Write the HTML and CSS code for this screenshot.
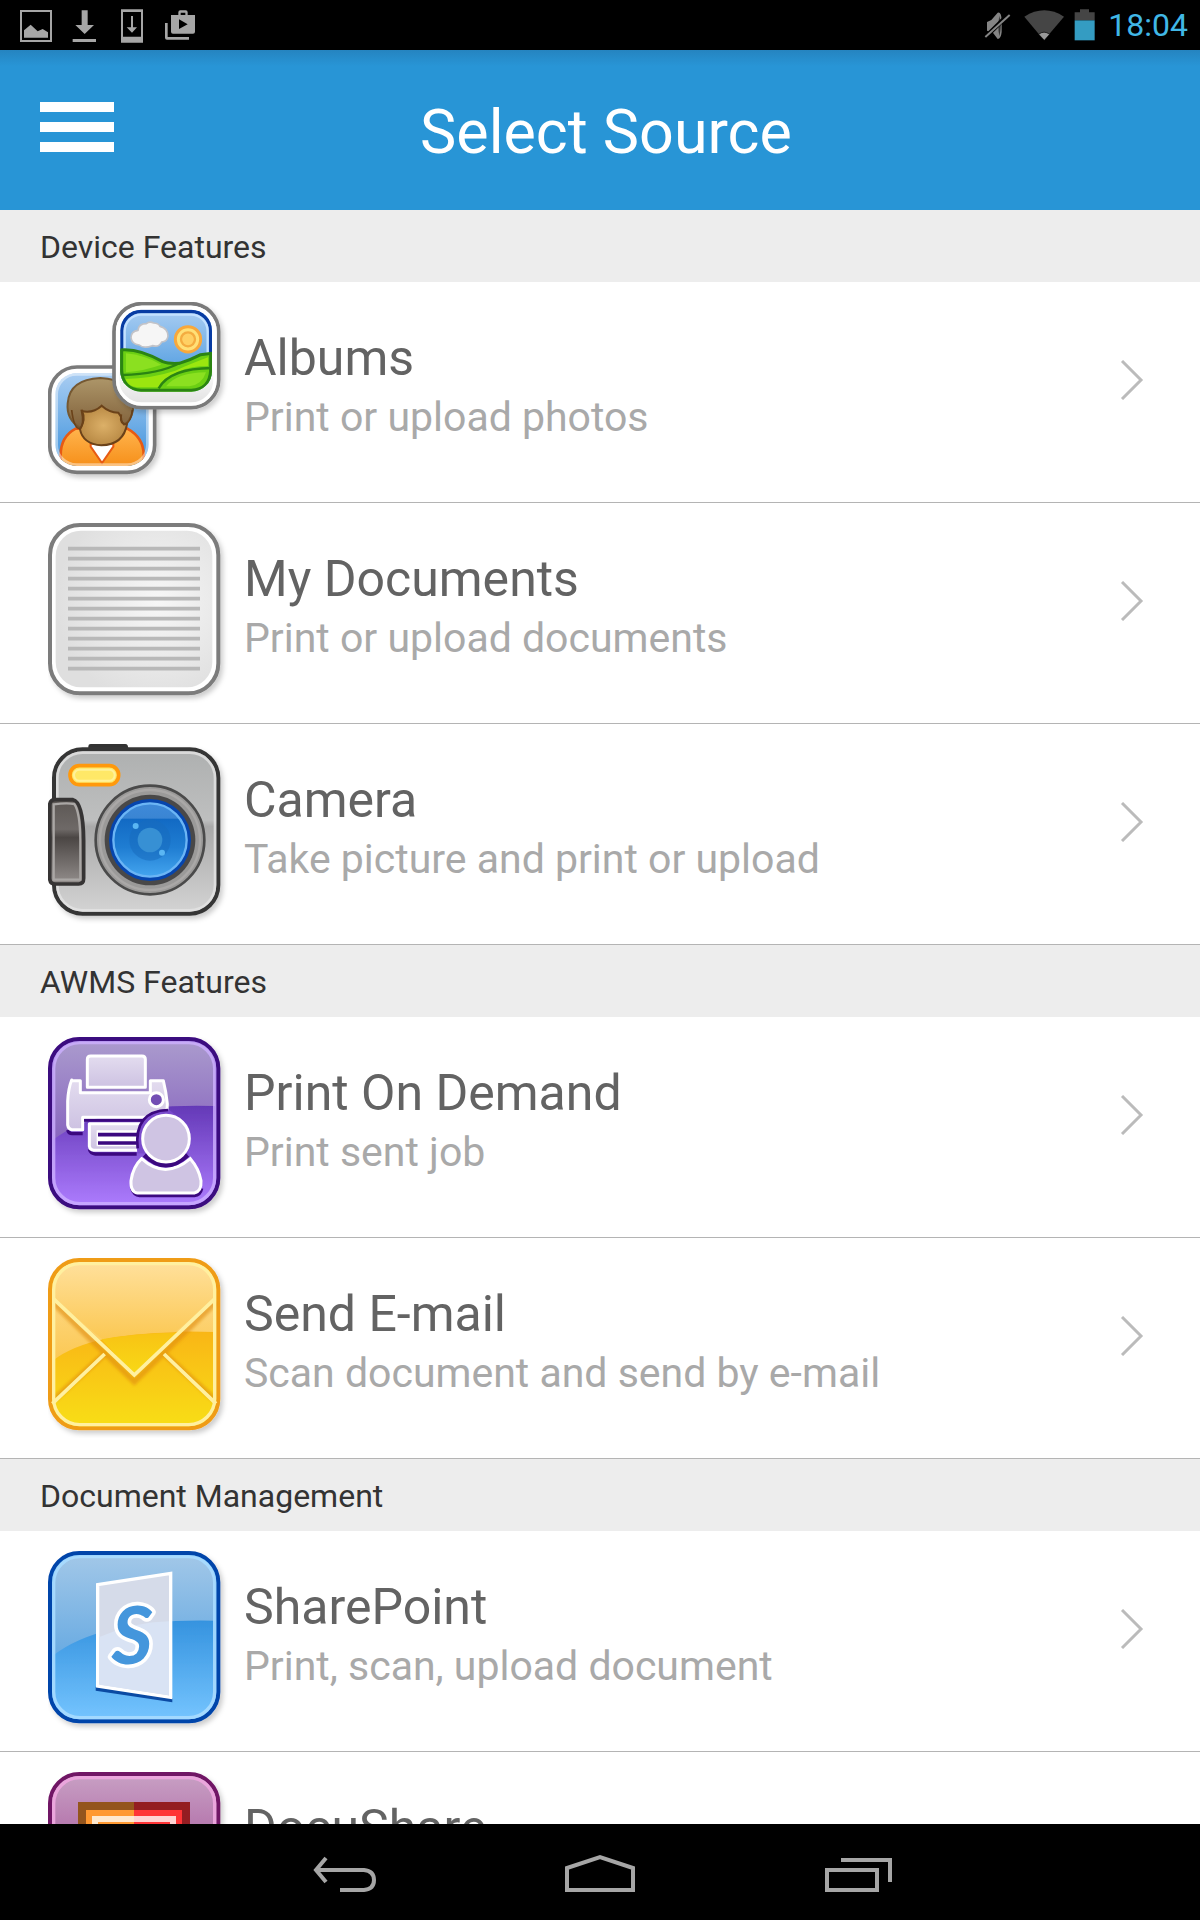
FILE: index.html
```html
<!DOCTYPE html>
<html lang="en">
<head>
<meta charset="utf-8">
<meta name="viewport" content="width=device-width, initial-scale=1">
<title>Select Source</title>
<link rel="stylesheet" href="styles.css">
</head>
<body>
<div class="status">
  <div class="status-left">
    <svg width="180" height="36" viewBox="54 18 540 108" fill="#a6a6a6" aria-hidden="true">
      <path d="M60 27h96v96H60zM66 33v84h84V33z" fill-rule="evenodd"/>
      <path d="M72 110V88l20-17 21 20 15-7 16 10v16z"/>
      <path d="M245 28h18v44h19l-28 27-28-27h19zM218 114h70v9h-70z"/>
      <path d="M363 25h66v100h-66zM369 33v74h54V33z" fill-rule="evenodd"/>
      <path d="M393 45h6v34h12l-15 16-16-16h13z"/>
      <path d="M495 66h8v42h64v8h-66q-6 0-6-6z"/>
      <path d="M513 42h22v-8q0-6 6-6h16q6 0 6 6v8h22v50q0 6-6 6h-60q-6 0-6-6zM542 42h14v-7h-14zM537 55v29l26-14z" fill-rule="evenodd"/>
    </svg>
  </div>
  <div class="status-right">
    <svg width="112" height="36" viewBox="250 20 336 108" aria-hidden="true">
      <path d="M259 65l13-6 19-22q10-5 12 20v38q-2 20-12 21l-13-17-19-8z" fill="#858585"/>
      <path d="M296 46q8 30 0 62q-6-30 0-62" fill="#333"/>
      <path d="M252 113l74-73" stroke="#000" stroke-width="13"/>
      <path d="M254 110l73-66" stroke="#858585" stroke-width="6"/>
      <path d="M371 49q60-38 119 0l-60 71z" fill="#454545"/>
      <path d="M414 102q16-13 33 0l-16 18z" fill="#999" stroke="#000" stroke-width="2"/>
      <path d="M522 36h16v-9h27v9h17v24h-60z" fill="#454545"/>
      <path d="M522 60h60v60h-60z" fill="#349cc2"/>
    </svg>
    <time class="clock">18:04</time>
  </div>
</div>

<header class="appbar">
  <button class="menu" type="button" aria-label="Menu"><span class="bar"></span><span class="bar"></span><span class="bar"></span></button>
  <h1 class="title">Select Source</h1>
</header>

<svg class="defs" width="0" height="0" aria-hidden="true">
  <defs>
    <filter id="shadow" x="-10%" y="-10%" width="125%" height="125%"><feDropShadow dx="8" dy="10" stdDeviation="8" flood-color="#000" flood-opacity=".2"/></filter>
    <filter id="soft" x="-10%" y="-10%" width="120%" height="120%"><feGaussianBlur stdDeviation="5"/></filter>
    <linearGradient id="sky" x1="0" y1="0" x2="0" y2="1"><stop offset="0" stop-color="#a9cdf2"/><stop offset="1" stop-color="#3d92dc"/></linearGradient>
    <linearGradient id="hair" x1="0" y1="0" x2="0" y2="1"><stop offset="0" stop-color="#ad9669"/><stop offset="1" stop-color="#80603a"/></linearGradient>
    <radialGradient id="face"><stop offset="0" stop-color="#dcb068"/><stop offset="1" stop-color="#b98a45"/></radialGradient>
    <linearGradient id="shirt" x1="0" y1="0" x2="0" y2="1"><stop offset="0" stop-color="#ffb44d"/><stop offset="1" stop-color="#f58a12"/></linearGradient>
    <linearGradient id="frame" x1="0" y1="0" x2="0" y2="1"><stop offset=".6" stop-color="#fff"/><stop offset="1" stop-color="#dedede"/></linearGradient>
    <radialGradient id="paper" cx=".65" cy=".45" r=".65"><stop offset="0" stop-color="#f7f7f7"/><stop offset="1" stop-color="#dfdfdf"/></radialGradient>
    <linearGradient id="body" x1="0" y1="0" x2="0" y2="1"><stop offset="0" stop-color="#aeb0b0"/><stop offset=".43" stop-color="#bebfbf"/><stop offset=".47" stop-color="#a9a9a9"/><stop offset="1" stop-color="#d4d4d4"/></linearGradient>
    <linearGradient id="grip" x1="0" y1="0" x2="0" y2="1"><stop offset="0" stop-color="#5c5754"/><stop offset=".35" stop-color="#6e6967"/><stop offset=".45" stop-color="#4b4644"/><stop offset="1" stop-color="#938e8c"/></linearGradient>
    <linearGradient id="lens" x1="0" y1="0" x2="0" y2="1"><stop offset="0" stop-color="#3f8ad9"/><stop offset=".2" stop-color="#3a85d3"/><stop offset=".22" stop-color="#126ac4"/><stop offset=".6" stop-color="#1f7dd2"/><stop offset="1" stop-color="#44a5ef"/></linearGradient>
    <linearGradient id="violet" x1="0" y1="0" x2="0" y2="1"><stop offset=".38" stop-color="#6237b5"/><stop offset="1" stop-color="#ae7dff"/></linearGradient>
    <linearGradient id="violetTop" x1="0" y1="0" x2="0" y2="1"><stop offset="0" stop-color="#aa9acd"/><stop offset="1" stop-color="#8866bf"/></linearGradient>
    <linearGradient id="sheet" x1="0" y1="0" x2="0" y2="1"><stop offset="0" stop-color="#e3dcef"/><stop offset="1" stop-color="#cdc2e2"/></linearGradient>
    <linearGradient id="gold" x1="0" y1="0" x2="0" y2="1"><stop offset=".4" stop-color="#f9b413"/><stop offset="1" stop-color="#f8df15"/></linearGradient>
    <linearGradient id="goldTop" x1="0" y1="0" x2="0" y2="1"><stop offset="0" stop-color="#ffe09b"/><stop offset="1" stop-color="#fbc853"/></linearGradient>
    <linearGradient id="flapTip" x1="0" y1="0" x2="0" y2="1"><stop offset="0" stop-color="#f8c314"/><stop offset="1" stop-color="#f8d916"/></linearGradient>
    <linearGradient id="azure" x1="0" y1="0" x2="0" y2="1"><stop offset=".38" stop-color="#3391de"/><stop offset="1" stop-color="#76c5ff"/></linearGradient>
    <linearGradient id="azureTop" x1="0" y1="0" x2="0" y2="1"><stop offset="0" stop-color="#a1c7e8"/><stop offset="1" stop-color="#69abe2"/></linearGradient>
    <linearGradient id="plum" x1="0" y1="0" x2="0" y2="1"><stop offset="0" stop-color="#c8a0c4"/><stop offset="1" stop-color="#8f247f"/></linearGradient>
  </defs>
</svg>

<main class="sources">
  <section>
    <h2 class="group">Device Features</h2>
    <a class="row" href="#albums">
      <svg class="icon" viewBox="54 51 540 540" aria-hidden="true">
        <rect x="59" y="246" width="315" height="316" rx="82" fill="#fff" stroke="#7a7a7a" stroke-width="11" filter="url(#shadow)"/>
        <clipPath id="portrait"><rect x="76" y="264" width="280" height="279" rx="65"/></clipPath>
        <g clip-path="url(#portrait)">
          <path d="M76 264h280v279H76z" fill="url(#sky)"/>
          <path d="M92 560v-50q0-55 45-79h155q49 27 49 79v50z" fill="url(#shirt)" stroke="#e75a13" stroke-width="8"/>
          <path d="M182 485l34 49 34-49v-9h-68z" fill="#fff" stroke="#e75a13" stroke-width="6"/>
          <path d="M152 430q-44-27-39-75 5-72 98-76 94 4 99 76 2 48-38 75z" fill="url(#hair)" stroke="#755832" stroke-width="6"/>
          <path d="M150 433q14-18 5-55 34 8 60-16 22 20 50 21l8 12q-4 23 18 22-10 62-77 64-55-4-64-48z" fill="url(#face)" stroke="#6b4219" stroke-width="6"/>
          <path d="M125 375q7 58 25 56 20-26 5-57M307 375q-3 38-25 44-11-12-8-31" fill="none" stroke="#6b4219" stroke-width="5"/>
          <rect x="80" y="268" width="272" height="271" rx="60" fill="none" stroke="#fff" stroke-opacity=".45" stroke-width="8"/>
        </g>
        <rect x="252" y="56" width="314" height="312" rx="84" fill="url(#frame)" stroke="#7a7a7a" stroke-width="11" filter="url(#shadow)"/>
        <rect x="263" y="67" width="292" height="290" rx="72" fill="none" stroke="#fff" stroke-width="10"/>
        <clipPath id="view"><rect x="271" y="74" width="275" height="246" rx="62"/></clipPath>
        <g clip-path="url(#view)">
          <path d="M271 74h275v246H271z" fill="url(#sky)"/>
          <rect x="275" y="79" width="267" height="260" rx="58" fill="none" stroke="#083ca3" stroke-width="11"/>
          <rect x="284" y="89" width="249" height="250" rx="50" fill="none" stroke="#c3e1ff" stroke-width="7"/>
          <path d="M303 158q0-20 21-22 2-20 25-20 9-8 22-2 14 0 19 10 24 6 24 29-2 17-19 18-8 17-28 11-26 10-39-2-23-2-25-22z" fill="#f6f6f6" stroke="#c2c3c8" stroke-width="5"/>
          <circle cx="474" cy="163" r="38" fill="#ffe077" stroke="#f8a83c" stroke-width="9"/>
          <circle cx="474" cy="163" r="21" fill="#ffd064" stroke="#f4ac40" stroke-width="7"/>
          <path d="M268 195q57-7 130 35 17 7 50 5 34-10 64-26l40-5v130H268z" fill="#6bcf13" stroke="#2b8413" stroke-width="9"/>
          <path d="M288 205q55 5 106 34-50 18-106 23z" fill="#8be020"/>
          <path d="M286 282q80-2 150-25 40-18 98-40v26q-100 0-148 64h-64q-28-2-36-25z" fill="#9be60f"/>
          <path d="M408 304q34-42 120-42-12 38-50 42z" fill="#8be020"/>
          <path d="M277 270q110-3 174-37" fill="none" stroke="#2b8413" stroke-width="7"/>
          <path d="M386 310q33-60 160-61" fill="none" stroke="#2b8413" stroke-width="7"/>
          <path d="M275 195v59q2 60 58 62h151q56-2 58-62v-49" fill="none" stroke="#2b8413" stroke-width="9"/>
        </g>
      </svg>
      <span class="text"><span class="name">Albums</span><span class="note">Print or upload photos</span></span>
      <svg class="chevron" viewBox="0 0 24 40" aria-hidden="true"><path d="M2 1l19 19L2 39"/></svg>
    </a>
    <a class="row" href="#documents">
      <svg class="icon" viewBox="54 54 540 540" aria-hidden="true">
        <rect x="60" y="60" width="505" height="505" rx="90" fill="#fff" stroke="#7b7b7b" stroke-width="12" filter="url(#shadow)"/>
        <rect x="77" y="77" width="470" height="470" rx="76" fill="url(#paper)"/>
        <path d="M114 131h396M114 161h396M114 191h396M114 221h396M114 251h396M114 281h396M114 311h396M114 341h396M114 371h396M114 401h396M114 431h396M114 461h396M114 491h396" stroke="#b8b8b8" stroke-width="11"/>
      </svg>
      <span class="text"><span class="name">My Documents</span><span class="note">Print or upload documents</span></span>
      <svg class="chevron" viewBox="0 0 24 40" aria-hidden="true"><path d="M2 1l19 19L2 39"/></svg>
    </a>
    <a class="row" href="#camera">
      <svg class="icon" viewBox="54 57 540 540" aria-hidden="true">
        <path d="M175 76V64q0-7 7-7h104q9 0 9 16v3z" fill="#333"/>
        <rect x="72" y="73" width="493" height="493" rx="86" fill="url(#body)" stroke="#343434" stroke-width="12" filter="url(#shadow)"/>
        <rect x="82" y="83" width="473" height="473" rx="76" fill="none" stroke="#e3e3e3" stroke-opacity=".8" stroke-width="8"/>
        <rect x="120" y="122" width="146" height="57" rx="28" fill="#ffe867" stroke="#ff990c" stroke-width="11"/>
        <rect x="132" y="134" width="122" height="33" rx="16" fill="none" stroke="#fff29a" stroke-width="6"/>
        <circle cx="360" cy="345" r="163" fill="#9b9a99" stroke="#4a4a4a" stroke-width="8"/>
        <circle cx="360" cy="345" r="150" fill="none" stroke="#aaa8a7" stroke-width="7"/>
        <circle cx="360" cy="345" r="136" fill="#494848"/>
        <circle cx="360" cy="345" r="123" fill="#0645ad"/>
        <circle cx="360" cy="345" r="110" fill="url(#lens)" stroke="#6bb5f5" stroke-width="7"/>
        <circle cx="360" cy="345" r="62" fill="#176bbd" fill-opacity=".55"/>
        <circle cx="360" cy="345" r="37" fill="#3790d4"/>
        <circle cx="317" cy="303" r="9" fill="#5ab6f3"/><circle cx="396" cy="383" r="9" fill="#5ab6f3"/>
        <path d="M59 239q2-15 16-15h54q31 7 32 122v114q0 17-15 17H76q-16 0-17-17z" fill="url(#grip)" stroke="#363434" stroke-width="11"/>
        <path d="M71 238q40-5 62-1 17 24 18 109v118H71z" fill="none" stroke="#aaa7a5" stroke-width="7"/>
      </svg>
      <span class="text"><span class="name">Camera</span><span class="note">Take picture and print or upload</span></span>
      <svg class="chevron" viewBox="0 0 24 40" aria-hidden="true"><path d="M2 1l19 19L2 39"/></svg>
    </a>
  </section>
  <section>
    <h2 class="group">AWMS Features</h2>
    <a class="row" href="#print">
      <svg class="icon" viewBox="54 51 540 540" aria-hidden="true">
        <rect x="60" y="57" width="505" height="505" rx="88" fill="url(#violet)" stroke="#3b087f" stroke-width="12" filter="url(#shadow)"/>
        <path d="M70 359V144q4-74 78-78h329q74 4 78 78v114q-340-10-485 101z" fill="url(#violetTop)"/>
        <rect x="71" y="68" width="483" height="483" rx="78" fill="none" stroke="#cdb0ff" stroke-opacity=".8" stroke-width="10"/>
        <path d="M113 330q4 12 15 11h30M178 388q4 13 18 14h124M305 505q6 20 24 22h164q18-2 22-22" fill="none" stroke="#3b087f" stroke-width="10"/>
        <g fill="url(#sheet)" stroke="#fff" stroke-width="9" stroke-linejoin="round">
          <path d="M125 182h26v36h210v-36h39q8 32 12 70l-2 40H158v37h-33q-10-2-12-14v-72q2-38 12-63z"/>
          <path d="M172 202v-84q0-10 10-10h154q10 0 10 10v84z"/>
          <path d="M178 311v68q2 11 13 12h150v-80z"/>
        </g>
        <path d="M162 301h190" stroke="#3b087f" stroke-width="8"/>
        <path d="M200 331h140v48H200z" fill="#fff"/>
        <path d="M204 344h136M204 369h136" stroke="#3b087f" stroke-width="11"/>
        <circle cx="379" cy="239" r="21" fill="#734eb4" stroke="#fff" stroke-width="9"/>
        <path d="M322 400q-8-56 9-84 30-50 84-48l60 46v90z" fill="#7a4bcc"/>
        <path d="M323 385q-12-112 91-115" fill="none" stroke="#3b087f" stroke-width="8"/>
        <path d="M335 416q70 64 146 0 26 30 32 66 2 33-20 37H322q-21-3-19-37 6-42 32-66z" fill="#cfc4e3" stroke="#fff" stroke-width="9"/>
        <path d="M346 402q62 58 124 0" fill="none" stroke="#3b087f" stroke-width="22"/>
        <circle cx="408" cy="356" r="70" fill="#cfc4e3" stroke="#fff" stroke-width="9"/>
      </svg>
      <span class="text"><span class="name">Print On Demand</span><span class="note">Print sent job</span></span>
      <svg class="chevron" viewBox="0 0 24 40" aria-hidden="true"><path d="M2 1l19 19L2 39"/></svg>
    </a>
    <a class="row" href="#email">
      <svg class="icon" viewBox="54 54 540 540" aria-hidden="true">
        <rect x="60" y="60" width="505" height="505" rx="88" fill="url(#gold)" stroke="#ef9c19" stroke-width="12" filter="url(#shadow)"/>
        <path d="M70 361V146q4-76 78-78h329q74 4 78 78v130q-360-12-485 85z" fill="url(#goldTop)"/>
        <path d="M70 188l243 237 242-237M74 476l152-136M551 476L401 340" fill="none" stroke="#df8b10" stroke-width="18" opacity=".6" filter="url(#soft)"/>
        <path d="M70 176l147 122q96-18 217-21L555 176v-30q-4-74-78-78H148q-74 4-78 78z" fill="url(#goldTop)"/>
        <path d="M215 298l98 107 130-127q-120 0-228 20z" fill="url(#flapTip)"/>
        <rect x="71" y="71" width="483" height="483" rx="78" fill="none" stroke="#fff0a0" stroke-width="10"/>
        <path d="M70 176l243 229 242-229M67 491l157-149M558 491L402 342" fill="none" stroke="#fff0a0" stroke-width="11"/>
      </svg>
      <span class="text"><span class="name">Send E-mail</span><span class="note">Scan document and send by e-mail</span></span>
      <svg class="chevron" viewBox="0 0 24 40" aria-hidden="true"><path d="M2 1l19 19L2 39"/></svg>
    </a>
  </section>
  <section>
    <h2 class="group">Document Management</h2>
    <a class="row" href="#sharepoint">
      <svg class="icon" viewBox="54 48 540 540" aria-hidden="true">
        <rect x="60" y="54" width="505" height="505" rx="88" fill="url(#azure)" stroke="#0645aa" stroke-width="12" filter="url(#shadow)"/>
        <path d="M70 361V141q4-74 78-78h329q74 4 78 78v116q-340-8-485 104z" fill="url(#azureTop)"/>
        <rect x="71" y="65" width="483" height="483" rx="78" fill="none" stroke="#a8dcff" stroke-opacity=".9" stroke-width="10"/>
        <path d="M197 455l230 34v13l-230-35z" fill="#0b4aa3"/>
        <path d="M203 149l219-34v372l-219-34z" fill="#d5dbe9" stroke="#fff" stroke-width="10"/>
        <path d="M208 306q100-44 209-47v222l-209-32z" fill="#d9e3f4"/>
        <text class="share-letter" x="306" y="388" text-anchor="middle">S</text>
      </svg>
      <span class="text"><span class="name">SharePoint</span><span class="note">Print, scan, upload document</span></span>
      <svg class="chevron" viewBox="0 0 24 40" aria-hidden="true"><path d="M2 1l19 19L2 39"/></svg>
    </a>
    <a class="row" href="#docushare">
      <svg class="icon" viewBox="54 96 540 540" aria-hidden="true">
        <rect x="60" y="102" width="505" height="505" rx="88" fill="url(#plum)" stroke="#701465" stroke-width="12" filter="url(#shadow)"/>
        <rect x="71" y="113" width="483" height="483" rx="78" fill="none" stroke="#eaa5dc" stroke-width="10"/>
        <path d="M144 186h168v336H144z" fill="#94551d"/><path d="M312 186h168v336H312z" fill="#941d22"/>
        <path d="M168 210h144v288H168z" fill="#ff9932"/><path d="M312 210h144v288H312z" fill="#ff3436"/>
        <path d="M186 228h126v252H186z" fill="#ffe9cf"/><path d="M312 228h126v252H312z" fill="#ffd3d3"/>
        <path d="M204 246h108v216H204z" fill="#ff9932"/><path d="M312 246h108v216H312z" fill="#ff3436"/>
      </svg>
      <span class="text"><span class="name">DocuShare</span></span>
    </a>
  </section>
</main>

<nav class="navbar" aria-label="System">
  <button class="key" type="button" aria-label="Back"><svg width="72" height="40" viewBox="0 0 72 40"><path d="M34 34h24q10-1 10-10t-10-10H10M20 2l-10 12 10 12"/></svg></button>
  <button class="key" type="button" aria-label="Home"><svg width="72" height="40" viewBox="0 0 72 40"><path d="M3 34V12L36 1l33 11v22z"/></svg></button>
  <button class="key" type="button" aria-label="Recent apps"><svg width="72" height="40" viewBox="0 0 72 40"><path d="M5 14h50v20H5zM19 4h49v22"/></svg></button>
</nav>
</body>
</html>
```
FILE: styles.css
```css
* { box-sizing: border-box; }
body {
  margin: 0;
  height: 100vh;
  display: flex;
  flex-direction: column;
  background: #fff;
  font-family: Roboto, "Liberation Sans", sans-serif;
}
button { padding: 0; border: 0; background: none; }
svg { display: block; flex: none; }
h1, h2 { margin: 0; font-weight: 400; }
.defs { position: absolute; }

.status {
  flex: none;
  display: flex;
  justify-content: space-between;
  align-items: center;
  height: 50px;
  padding: 0 12px 0 18px;
  background: #000;
}
.status-right { display: flex; align-items: center; gap: 12px; }
.clock { font-size: 32px; line-height: 48px; color: #41b7e6; }

.appbar {
  flex: none;
  display: grid;
  grid-template-columns: 88px 1fr 76px;
  align-items: center;
  height: 160px;
  padding: 0 32px;
  background: linear-gradient(#2584c0, #2895d6 16px);
}
.menu {
  display: flex;
  flex-direction: column;
  gap: 10px;
  width: 90px;
  padding: 0 8px 6px;
}
.bar { height: 10px; background: #fff; }
.title {
  padding-top: 4px;
  font-size: 61px;
  line-height: 72px;
  text-align: center;
  color: #fff;
}

.sources { flex: 1; min-height: 0; overflow: hidden; }
.group {
  padding: 2px 40px 0;
  font-size: 32px;
  line-height: 70px;
  color: #333;
  background: #ededed;
}
.row {
  display: flex;
  align-items: flex-start;
  gap: 16px;
  padding: 20px 56px 20px 48px;
  border-bottom: 1px solid #b4b4b4;
  color: #636363;
  text-decoration: none;
}
.icon { width: 180px; height: 180px; }
.text { flex: 1; padding-top: 24px; }
.name, .note { display: block; }
.name { font-size: 50px; line-height: 64px; }
.note { font-size: 41px; line-height: 54px; color: #a9a9a9; }
.chevron {
  width: 24px;
  height: 40px;
  margin-top: 58px;
  fill: none;
  stroke: #bbb;
  stroke-width: 3;
}
.share-letter {
  font: italic 700 240px Lato, sans-serif;
  fill: #4496dc;
  stroke: #fff;
  stroke-width: 22px;
  stroke-linejoin: round;
  paint-order: stroke;
}

.navbar {
  flex: none;
  display: flex;
  justify-content: center;
  align-items: flex-start;
  gap: 186px;
  height: 96px;
  padding-top: 32px;
  background: #000;
}
.key svg { overflow: visible; fill: none; stroke: #a6a6a6; stroke-width: 4; }
```
